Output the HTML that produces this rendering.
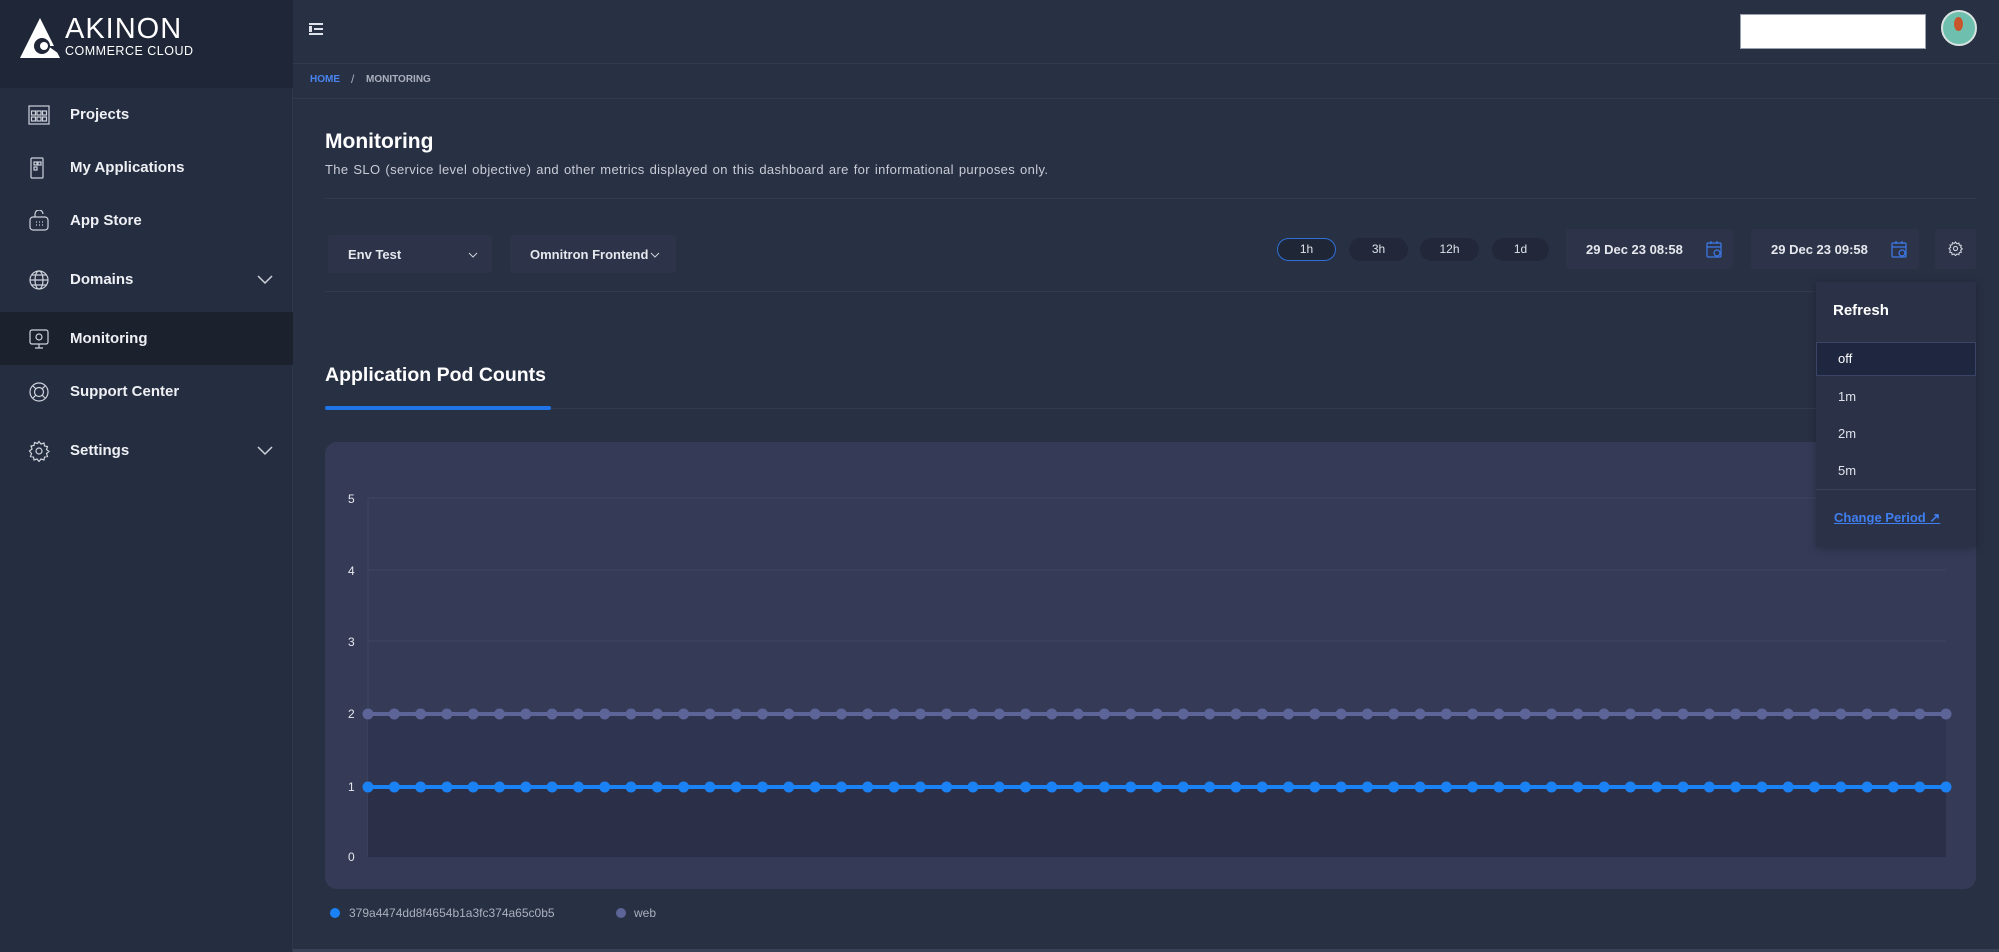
<!DOCTYPE html>
<html><head><meta charset="utf-8"><style>
*{margin:0;padding:0;box-sizing:border-box}
body{width:1999px;height:952px;overflow:hidden;background:#283044;font-family:"Liberation Sans",sans-serif;color:#e6e8ee;position:relative}
.a{position:absolute}
.side{left:0;top:0;width:293px;height:952px;background:#252d40;border-right:1px solid #2f3749}
.logo{left:0;top:0;width:293px;height:88px;background:#1f2637}
.mi{left:0;width:293px;height:53px;display:flex;align-items:center;font-weight:bold;font-size:15px;color:#eef0f4}
.mi svg{position:absolute;left:28px}
.mi span{position:absolute;left:70px}
.chev{position:absolute;right:20px}
.line{background:#313a4f;height:1px}
.pill{height:23px;border-radius:12px;background:#222839;font-size:12px;text-align:center;line-height:23px;color:#dfe2ea}
.box{background:#2d3449;border-radius:3px;font-size:13px;font-weight:bold;color:#e6e8ee}
.dd div{position:absolute;left:22px;font-size:13px;color:#dfe2ea}
</style></head><body>
<div class="a side"></div>
<div class="a logo"></div>
<svg class="a" style="left:18px;top:16px" width="44" height="44" viewBox="0 0 44 44"><path d="M22 2 L42 42 L2 42 Z" fill="#fff"/><circle cx="24" cy="30" r="8" fill="#1f2637"/><circle cx="26" cy="30" r="4" fill="#fff"/><path d="M30 30 L44 30 L44 40 Z" fill="#1f2637"/></svg>
<div class="a" style="left:65px;top:13px;font-size:29px;color:#fff;letter-spacing:1px">AKINON</div>
<div class="a" style="left:65px;top:44px;font-size:12.5px;color:#fff;letter-spacing:0.5px">COMMERCE CLOUD</div>

<div class="a mi" style="top:88px"><svg width="22" height="20" viewBox="0 0 22 20" fill="none" stroke="#cfd3dc" stroke-width="1.2"><rect x="1" y="1" width="20" height="18"/><rect x="3.5" y="6" width="4" height="4"/><rect x="9" y="6" width="4" height="4"/><rect x="14.5" y="6" width="4" height="4"/><rect x="3.5" y="12" width="4" height="4"/><rect x="9" y="12" width="4" height="4"/><rect x="14.5" y="12" width="4" height="4"/></svg><span>Projects</span></div>
<div class="a mi" style="top:141px"><svg width="18" height="22" viewBox="0 0 18 22" fill="none" stroke="#cfd3dc" stroke-width="1.2"><rect x="3" y="1" width="12" height="20" rx="1"/><rect x="6" y="5" width="3" height="3"/><rect x="10" y="5" width="3" height="3"/><rect x="6" y="10" width="3" height="3"/></svg><span>My Applications</span></div>
<div class="a mi" style="top:194px"><svg width="22" height="22" viewBox="0 0 22 22" fill="none" stroke="#cfd3dc" stroke-width="1.2"><rect x="2" y="7" width="18" height="13" rx="3"/><path d="M7 7 V4 a4 4 0 0 1 8 0"/><path d="M8 12h1M11 12h1M14 12h1M8 15h1M11 15h1M14 15h1"/></svg><span>App Store</span></div>
<div class="a mi" style="top:253px"><svg width="22" height="22" viewBox="0 0 22 22" fill="none" stroke="#cfd3dc" stroke-width="1.2"><circle cx="11" cy="11" r="9"/><ellipse cx="11" cy="11" rx="4" ry="9"/><path d="M2 11h18M4 6h14M4 16h14"/></svg><span>Domains</span><svg class="chev" style="left:auto;right:20px" width="16" height="10" viewBox="0 0 16 10"><path d="M1 1l7 7 7-7" fill="none" stroke="#cfd3dc" stroke-width="1.5"/></svg></div>
<div class="a mi" style="top:312px;background:#1c212e"><svg width="22" height="22" viewBox="0 0 22 22" fill="none" stroke="#cfd3dc" stroke-width="1.2"><rect x="2" y="2" width="18" height="14" rx="2"/><path d="M11 16v4M7 20h8"/><circle cx="11" cy="9" r="3"/></svg><span>Monitoring</span></div>
<div class="a mi" style="top:365px"><svg width="22" height="22" viewBox="0 0 22 22" fill="none" stroke="#cfd3dc" stroke-width="1.2"><circle cx="11" cy="11" r="9"/><circle cx="11" cy="11" r="4.5"/><path d="M5 5l3 3M17 5l-3 3M5 17l3-3M17 17l-3-3"/></svg><span>Support Center</span></div>
<div class="a mi" style="top:424px"><svg width="22" height="22" viewBox="0 0 22 22" fill="none" stroke="#cfd3dc" stroke-width="1.2"><circle cx="11" cy="11" r="3"/><path d="M11 1.5l2 2.5 3-1 .5 3 3 .5-1 3 2.5 2-2.5 2 1 3-3 .5-.5 3-3-1-2 2.5-2-2.5-3 1-.5-3-3-.5 1-3L1.5 11 4 9 3 6l3-.5.5-3 3 1z"/></svg><span>Settings</span><svg class="chev" style="left:auto;right:20px" width="16" height="10" viewBox="0 0 16 10"><path d="M1 1l7 7 7-7" fill="none" stroke="#cfd3dc" stroke-width="1.5"/></svg></div>

<svg class="a" style="left:309px;top:23px" width="14" height="12" viewBox="0 0 14 12" fill="#dfe2ea"><rect x="0" y="0" width="14" height="2"/><rect x="5" y="5" width="9" height="2"/><rect x="0" y="10" width="14" height="2"/><rect x="0" y="3" width="3" height="6"/></svg>
<div class="a line" style="left:293px;top:63px;width:1706px"></div>
<div class="a" style="left:1740px;top:14px;width:186px;height:35px;background:#fff;border:1px solid #9aa0ad"></div>
<div class="a" style="left:1941px;top:10px;width:36px;height:36px;border-radius:50%;background:#6fbfae;border:2px solid #d9e3e0"></div>
<div class="a" style="left:1954px;top:17px;width:9px;height:14px;border-radius:50%;background:#c9552c"></div>
<div class="a" style="left:310px;top:74px;font-size:10px;font-weight:bold;color:#4a84f0">HOME</div>
<div class="a" style="left:351px;top:72px;font-size:12px;color:#aab0bd">/</div>
<div class="a" style="left:366px;top:74px;font-size:10px;font-weight:bold;color:#aab0bd">MONITORING</div>
<div class="a line" style="left:293px;top:98px;width:1706px"></div>

<div class="a" style="left:325px;top:130px;font-size:21px;font-weight:bold;color:#fff">Monitoring</div>
<div class="a" style="left:325px;top:162px;font-size:13px;color:#c9ccd5;letter-spacing:0.35px;word-spacing:1px">The SLO (service level objective) and other metrics displayed on this dashboard are for informational purposes only.</div>
<div class="a line" style="left:325px;top:198px;width:1651px"></div>

<div class="a box" style="left:328px;top:235px;width:164px;height:38px"><span class="a" style="left:20px;top:12px">Env Test</span><svg class="a" style="left:140px;top:17px" width="10" height="6"><path d="M1 1l4 4 4-4" fill="none" stroke="#cfd3dc"/></svg></div>
<div class="a box" style="left:510px;top:235px;width:166px;height:38px;overflow:hidden"><span class="a" style="left:20px;top:12px;width:118px;overflow:hidden;white-space:nowrap">Omnitron Frontend</span><svg class="a" style="left:140px;top:17px" width="10" height="6"><path d="M1 1l4 4 4-4" fill="none" stroke="#cfd3dc"/></svg></div>

<div class="a pill" style="left:1277px;top:238px;width:59px;border:1.5px solid #2f6fd6;background:#1f2636;line-height:20px">1h</div>
<div class="a pill" style="left:1349px;top:238px;width:59px">3h</div>
<div class="a pill" style="left:1420px;top:238px;width:59px">12h</div>
<div class="a pill" style="left:1492px;top:238px;width:57px">1d</div>
<div class="a box" style="left:1566px;top:229px;width:167px;height:40px"><span class="a" style="left:20px;top:13px;width:118px;overflow:hidden;white-space:nowrap">29 Dec 23 08:58</span><svg class="a" style="left:140px;top:11px" width="16" height="18" viewBox="0 0 16 18" fill="none" stroke="#3d7bea" stroke-width="1.2"><rect x="1" y="3" width="14" height="14" rx="1"/><path d="M1 7h14M5 1v3M11 1v3"/><circle cx="11" cy="13" r="3"/></svg></div>
<div class="a box" style="left:1751px;top:229px;width:168px;height:40px"><span class="a" style="left:20px;top:13px;width:118px;overflow:hidden;white-space:nowrap">29 Dec 23 09:58</span><svg class="a" style="left:140px;top:11px" width="16" height="18" viewBox="0 0 16 18" fill="none" stroke="#3d7bea" stroke-width="1.2"><rect x="1" y="3" width="14" height="14" rx="1"/><path d="M1 7h14M5 1v3M11 1v3"/><circle cx="11" cy="13" r="3"/></svg></div>
<div class="a box" style="left:1935px;top:229px;width:41px;height:40px"><svg class="a" style="left:13px;top:12px" width="15" height="15" viewBox="0 0 22 22" fill="none" stroke="#cfd3dc" stroke-width="1.6"><circle cx="11" cy="11" r="3"/><path d="M11 1.5l2 2.5 3-1 .5 3 3 .5-1 3 2.5 2-2.5 2 1 3-3 .5-.5 3-3-1-2 2.5-2-2.5-3 1-.5-3-3-.5 1-3L1.5 11 4 9 3 6l3-.5.5-3 3 1z"/></svg></div>
<div class="a line" style="left:325px;top:291px;width:1490px"></div>

<div class="a" style="left:325px;top:364px;font-size:19.5px;font-weight:bold;color:#fff">Application Pod Counts</div>
<div class="a line" style="left:325px;top:408px;width:1651px"></div>
<div class="a" style="left:325px;top:406px;width:226px;height:4px;background:#1f74ea;border-radius:2px"></div>

<div class="a" style="left:325px;top:442px;width:1651px;height:447px;background:#353b57;border-radius:12px"></div>
<svg class="a" style="left:325px;top:442px" width="1651" height="447">
<g stroke="#3d4463" stroke-width="1"><line x1="43" y1="56" x2="1621" y2="56"/><line x1="43" y1="128" x2="1621" y2="128"/><line x1="43" y1="199" x2="1621" y2="199"/><line x1="43" y1="56" x2="43" y2="415"/></g>
<rect x="43" y="272" width="1578" height="143" fill="#2f3450"/>
<rect x="43" y="345" width="1578" height="70" fill="#2b2f47"/>
<g fill="#e6e8ee" font-size="12" font-family="Liberation Sans"><text x="23" y="61">5</text><text x="23" y="133">4</text><text x="23" y="204">3</text><text x="23" y="276">2</text><text x="23" y="349">1</text><text x="23" y="419">0</text></g>
<line x1="43" y1="272" x2="1621" y2="272" stroke="#5c6498" stroke-width="4"/>
<line x1="43" y1="272" x2="1622" y2="272" stroke="#5c6498" stroke-width="11" stroke-linecap="round" stroke-dasharray="0 26.3"/>
<line x1="43" y1="345" x2="1621" y2="345" stroke="#1a82f5" stroke-width="4"/>
<line x1="43" y1="345" x2="1622" y2="345" stroke="#1a82f5" stroke-width="11" stroke-linecap="round" stroke-dasharray="0 26.3"/>
</svg>
<div class="a" style="left:330px;top:908px;width:10px;height:10px;border-radius:50%;background:#1a82f5"></div>
<div class="a" style="left:349px;top:906px;font-size:12px;color:#aab0bd">379a4474dd8f4654b1a3fc374a65c0b5</div>
<div class="a" style="left:616px;top:908px;width:10px;height:10px;border-radius:50%;background:#5c6498"></div>
<div class="a" style="left:634px;top:906px;font-size:12px;color:#aab0bd">web</div>

<div class="a dd" style="left:1816px;top:282px;width:160px;height:265px;background:#2b3247;box-shadow:0 2px 8px rgba(0,0,0,.25)">
<div style="left:17px;top:20px;font-size:15px;font-weight:bold;color:#fff">Refresh</div>
<div style="left:0;top:60px;width:160px;height:34px;background:#1f2740;border:1px solid #3a4566"></div>
<div style="top:69px;color:#fff">off</div>
<div style="top:107px">1m</div>
<div style="top:144px">2m</div>
<div style="top:181px">5m</div>
<div style="left:0;top:207px;width:160px;height:1px;background:#3a4258"></div>
<div style="left:18px;top:228px;font-size:13px;font-weight:bold;color:#3f7ff0;text-decoration:underline">Change Period ↗</div>
</div>
<div class="a" style="left:293px;top:949px;width:1706px;height:3px;background:#3a4258"></div>
</body></html>
